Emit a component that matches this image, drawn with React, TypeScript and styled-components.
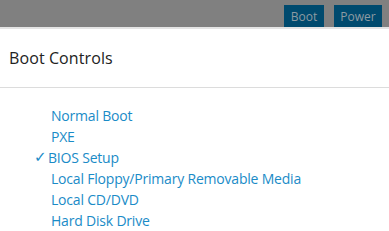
import React from "react";
import styled, { createGlobalStyle } from "styled-components";

const Global = createGlobalStyle`
  html, body { margin: 0; padding: 0; background: #fff; }
  body { font-family: "Open Sans", "Liberation Sans", sans-serif; }
`;

const Page = styled.div`
  width: 389px;
  height: 231px;
  overflow: hidden;
  background: #fff;
`;

const TopBar = styled.div`
  height: 27px;
  background: #808080;
  border-bottom: 2px solid #e4e4e4;
  display: flex;
  justify-content: flex-end;
  align-items: flex-end;
  gap: 10px;
  padding-right: 7px;
`;

const TopButton = styled.button<{ $w: number }>`
  width: ${(p) => p.$w}px;
  height: 22px;
  border: none;
  margin: 0;
  padding: 0;
  background: #004a6e;
  color: #8e9aa2;
  font-family: "Open Sans", "Liberation Sans", sans-serif;
  font-size: 12px;
  display: flex;
  align-items: center;
  justify-content: center;
`;

const Header = styled.div`
  height: 59px;
  border-bottom: 1px solid #dcdcdc;
  padding-left: 9px;
  display: flex;
  align-items: center;
  box-sizing: border-box;
`;

const Title = styled.h1`
  margin: 0;
  font-size: 16px;
  font-weight: 400;
  color: #222;
  letter-spacing: 0.1px;
`;

const List = styled.ul`
  list-style: none;
  margin: 0;
  padding: 17px 0 0 51px;
`;

const Item = styled.li<{ $checked?: boolean }>`
  position: relative;
  height: 21px;
  line-height: 21px;
  font-size: 14px;
  color: #1a8bc7;
  letter-spacing: -0.2px;
  margin-left: ${(p) => (p.$checked ? "-3px" : "0")};
`;

const Check = styled.span`
  position: absolute;
  left: -14px;
  top: 0;
  font-size: 15px;
  font-weight: 700;
  font-family: "DejaVu Sans", sans-serif;
`;

const items = [
  "Normal Boot",
  "PXE",
  "BIOS Setup",
  "Local Floppy/Primary Removable Media",
  "Local CD/DVD",
  "Hard Disk Drive",
];

export default function App() {
  return (
    <Page>
      <Global />
      <TopBar>
        <TopButton $w={40}>Boot</TopButton>
        <TopButton $w={48}>Power</TopButton>
      </TopBar>
      <Header>
        <Title>Boot Controls</Title>
      </Header>
      <List>
        {items.map((t) => {
          const checked = t === "BIOS Setup";
          return (
            <Item key={t} $checked={checked}>
              {checked && <Check>✓</Check>}
              {t}
            </Item>
          );
        })}
      </List>
    </Page>
  );
}
